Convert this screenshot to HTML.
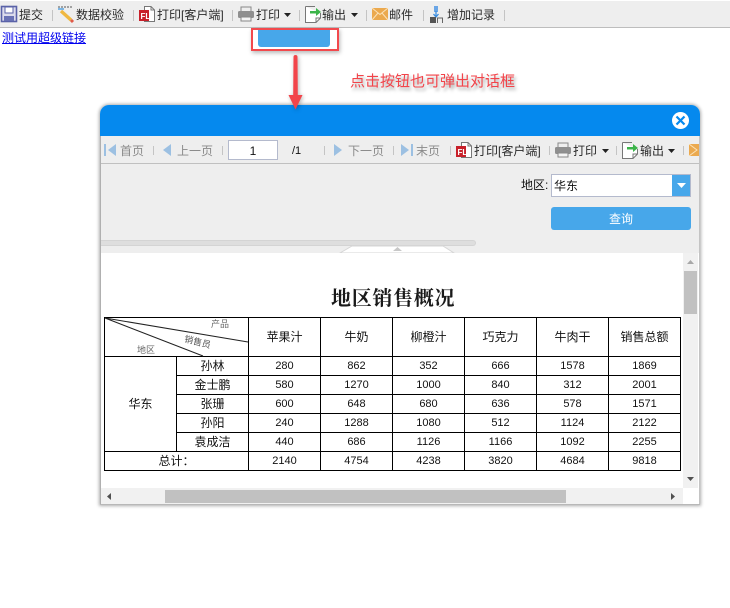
<!DOCTYPE html>
<html lang="zh">
<head>
<meta charset="utf-8">
<title>报表</title>
<style>
html,body{margin:0;padding:0;width:730px;height:608px;overflow:hidden;background:#fff}
body{position:relative;font-family:"Liberation Sans","WenQuanYi Zen Hei","Noto Sans CJK SC",sans-serif;font-size:12px;color:#222}
.a{position:absolute}
.t{position:absolute;white-space:nowrap;line-height:16px;font-size:12px;color:#2a2a2a}
.g{color:#8a8a8a}
.s{position:absolute;width:1px;height:11px;background:#c4c4c4}
svg{position:absolute;overflow:visible}
table{position:absolute;left:104px;top:317px;border-collapse:collapse;table-layout:fixed;width:577px;font-size:12px;color:#111}
td{border:1px solid #000;padding:0;text-align:center;height:18px;line-height:18px;overflow:hidden;background:#fff}
td.n{font-family:"Liberation Sans",sans-serif;font-size:11px}
tr.h td{height:38px}
</style>
</head>
<body>

<!-- top toolbar -->
<div class="a" style="left:0;top:1px;width:730px;height:26px;background:#eee"></div>
<div class="a" style="left:0;top:27px;width:730px;height:1px;background:#bdbdbd"></div>

<svg style="left:1px;top:6px" width="17" height="16"><rect x=".5" y=".5" width="15" height="15" fill="#dcdcec" stroke="#5a62a8" stroke-width="1.6"/><rect x="4" y="1" width="8" height="6" fill="#fff" stroke="#5a62a8"/><rect x="3" y="10" width="10" height="5" fill="#6a72b5"/></svg>
<span class="t" style="left:19px;top:7px">提交</span>
<div class="s" style="left:52px;top:10px"></div>

<svg style="left:58px;top:6px" width="17" height="17"><path d="M0 1H15" stroke="#555" stroke-dasharray="2 1"/><path d="M0 3H6" stroke="#4a9ee0" stroke-width="1.4"/><path d="M3 5L13 14" stroke="#f0b840" stroke-width="3.4"/><path d="M13 14L15 16" stroke="#e05a4a" stroke-width="3"/></svg>
<span class="t" style="left:76px;top:7px">数据校验</span>
<div class="s" style="left:133px;top:10px"></div>

<svg style="left:139px;top:6px" width="17" height="17"><path d="M5.500 .5H12L15.500 4V15.500H5.500Z" fill="#fff" stroke="#777"/><path d="M12 .5V4H15.500" fill="none" stroke="#777"/><rect x="0" y="4" width="10" height="11" fill="#c8202a"/><text x="1.500" y="13" font-size="8" font-weight="bold" fill="#fff" font-family="Liberation Sans">FL</text></svg>
<span class="t" style="left:157px;top:7px">打印[客户端]</span>
<div class="s" style="left:232px;top:10px"></div>

<svg style="left:238px;top:7px" width="16" height="15"><rect x="3" y="0" width="10" height="5" fill="#eee" stroke="#888"/><rect x="0" y="4" width="16" height="7" rx="1.500" fill="#8f8f8f"/><rect x="3" y="10" width="10" height="4" fill="#f4f4f4" stroke="#888"/></svg>
<span class="t" style="left:256px;top:7px">打印</span>
<svg style="left:284px;top:13px" width="7" height="4"><path d="M0 0H7L3.500 4Z" fill="#222"/></svg>
<div class="s" style="left:299px;top:10px"></div>

<svg style="left:305px;top:6px" width="17" height="17"><path d="M.5 .5H10M15.500 7V12L11 16.500H.5V.5" fill="#fff" stroke="#777"/><path d="M11 16V12H15.500" fill="none" stroke="#777"/><path d="M5 5H11V2L16 6L11 10V7.500H5Z" fill="#3cb44a"/></svg>
<span class="t" style="left:322px;top:7px">输出</span>
<svg style="left:351px;top:13px" width="7" height="4"><path d="M0 0H7L3.500 4Z" fill="#222"/></svg>
<div class="s" style="left:366px;top:10px"></div>

<svg style="left:372px;top:8px" width="16" height="12"><rect width="16" height="12" fill="#eba94e"/><path d="M0 0L8 6.500L16 0M0 12L6 5M16 12L10 5" fill="none" stroke="#fbe2b8"/></svg>
<span class="t" style="left:389px;top:7px">邮件</span>
<div class="s" style="left:423px;top:10px"></div>

<svg style="left:430px;top:6px" width="14" height="17"><rect x="4" y="0" width="4" height="6" fill="#6aa6e6"/><path d="M6 5V11M3.500 8L6 11L8.500 8" fill="none" stroke="#3c8ee0" stroke-width="1.300"/><rect x="0" y="11" width="6" height="6" fill="#555"/><path d="M7.500 17V12H12.500V17" fill="none" stroke="#666"/></svg>
<span class="t" style="left:447px;top:7px">增加记录</span>
<div class="s" style="left:504px;top:10px"></div>

<!-- link -->
<a class="t" style="left:2px;top:30px;color:#00e;text-decoration:underline;font-size:12px" href="#">测试用超级链接</a>

<!-- highlighted button -->
<div class="a" style="left:258px;top:28px;width:72px;height:19px;background:#47a7ea;border-radius:0 0 3px 3px"></div>
<div class="a" style="left:251px;top:28px;width:84px;height:19px;border:2px solid #f2494d;box-shadow:1px 2px 4px rgba(0,0,0,.28)"></div>

<!-- red note -->
<span class="a" style="left:350px;top:73px;font-size:15px;line-height:18px;color:#f2444a;white-space:nowrap;text-shadow:2px 3px 3px rgba(0,0,0,.35)">点击按钮也可弹出对话框</span>

<!-- dialog -->
<div class="a" style="left:100px;top:105px;width:600px;height:400px;background:#fff;border-radius:9px 9px 0 0;box-shadow:0 0 3px 1px rgba(0,0,0,.32);overflow:hidden">
  <div class="a" style="left:0;top:0;width:600px;height:31px;background:#0589ee"></div>
  <div class="a" style="left:0;top:31px;width:600px;height:27px;background:#eee"></div>
  <div class="a" style="left:0;top:58px;width:600px;height:1px;background:#c0c0c0"></div>
  <div class="a" style="left:0;top:59px;width:600px;height:89px;background:#eee"></div>
  <div class="a" style="left:0;top:31px;width:1px;height:369px;background:#b0b0b0"></div>
  <div class="a" style="left:599px;top:31px;width:1px;height:369px;background:#c4c4c4"></div>
  <div class="a" style="left:0;top:399px;width:600px;height:1px;background:#b8b8b8"></div>
</div>

<!-- arrow -->
<svg style="left:285px;top:52px;filter:drop-shadow(1px 1px 2px rgba(0,0,0,.3))" width="22" height="58"><path d="M8.500 5Q8.500 3 10.500 3Q12.500 3 12.500 5L12.800 43H17.500L10.500 57.500L3.500 43H8.200Z" fill="#f2444a"/></svg>

<!-- close -->
<svg style="left:672px;top:112px" width="17" height="17"><circle cx="8.500" cy="8.500" r="8.500" fill="#fff"/><path d="M4.500 4.500L12.500 12.500M12.500 4.500L4.500 12.500" stroke="#0589ee" stroke-width="2.200"/></svg>

<!-- dialog toolbar -->
<svg style="left:104px;top:144px" width="13" height="13"><rect x="0" y="0" width="2" height="12" fill="#9cc0e2"/><path d="M12 0V12L4 6Z" fill="#9cc0e2"/></svg>
<span class="t g" style="left:120px;top:143px">首页</span>
<div class="s" style="left:153px;top:146px;height:9px"></div>
<svg style="left:163px;top:144px" width="9" height="12"><path d="M8 0V12L0 6Z" fill="#9cc0e2"/></svg>
<span class="t g" style="left:177px;top:143px">上一页</span>
<div class="s" style="left:222px;top:146px;height:9px"></div>
<div class="a" style="left:228px;top:140px;width:48px;height:18px;background:#fff;border:1px solid #b4bacd;text-align:center;line-height:20px;font-size:12px;color:#111">1</div>
<span class="t" style="left:292px;top:143px;color:#111;font-size:11px">/1</span>
<div class="s" style="left:324px;top:146px;height:9px"></div>
<svg style="left:334px;top:144px" width="9" height="12"><path d="M0 0V12L8 6Z" fill="#9cc0e2"/></svg>
<span class="t g" style="left:348px;top:143px">下一页</span>
<div class="s" style="left:393px;top:146px;height:9px"></div>
<svg style="left:401px;top:144px" width="13" height="13"><path d="M0 0V12L8 6Z" fill="#9cc0e2"/><rect x="10" y="0" width="2" height="12" fill="#9cc0e2"/></svg>
<span class="t g" style="left:416px;top:143px">末页</span>
<div class="s" style="left:450px;top:146px;height:9px"></div>

<svg style="left:456px;top:142px" width="17" height="17"><path d="M5.500 .5H12L15.500 4V15.500H5.500Z" fill="#fff" stroke="#777"/><path d="M12 .5V4H15.500" fill="none" stroke="#777"/><rect x="0" y="4" width="10" height="11" fill="#c8202a"/><text x="1.500" y="13" font-size="8" font-weight="bold" fill="#fff" font-family="Liberation Sans">FL</text></svg>
<span class="t" style="left:474px;top:143px">打印[客户端]</span>
<div class="s" style="left:549px;top:146px;height:9px"></div>
<svg style="left:555px;top:143px" width="16" height="15"><rect x="3" y="0" width="10" height="5" fill="#eee" stroke="#888"/><rect x="0" y="4" width="16" height="7" rx="1.500" fill="#8f8f8f"/><rect x="3" y="10" width="10" height="4" fill="#f4f4f4" stroke="#888"/></svg>
<span class="t" style="left:573px;top:143px">打印</span>
<svg style="left:602px;top:149px" width="7" height="4"><path d="M0 0H7L3.500 4Z" fill="#222"/></svg>
<div class="s" style="left:616px;top:146px;height:9px"></div>
<svg style="left:622px;top:142px" width="17" height="17"><path d="M.5 .5H10M15.500 7V12L11 16.500H.5V.5" fill="#fff" stroke="#777"/><path d="M11 16V12H15.500" fill="none" stroke="#777"/><path d="M5 5H11V2L16 6L11 10V7.500H5Z" fill="#3cb44a"/></svg>
<span class="t" style="left:640px;top:143px">输出</span>
<svg style="left:668px;top:149px" width="7" height="4"><path d="M0 0H7L3.500 4Z" fill="#222"/></svg>
<div class="s" style="left:683px;top:146px;height:9px"></div>
<div class="a" style="left:689px;top:144px;width:10px;height:12px;background:#eba94e;overflow:hidden"><svg style="left:0;top:0" width="10" height="12"><path d="M0 0L8 6L0 12" fill="none" stroke="#fbe2b8"/></svg></div>

<!-- form -->
<span class="t" style="left:521px;top:177px;color:#111">地区:</span>
<div class="a" style="left:551px;top:174px;width:120px;height:21px;background:#fff;border:1px solid #b4bacd"></div>
<span class="t" style="left:554px;top:178px;color:#111">华东</span>
<div class="a" style="left:672px;top:174px;width:18px;height:21px;background:#47a7ea;border:1px solid #b4bacd;border-left:0"></div>
<svg style="left:677px;top:183px" width="9" height="5"><path d="M0 0H9L4.500 5Z" fill="#fff"/></svg>
<div class="a" style="left:551px;top:207px;width:140px;height:23px;background:#47a7ea;border-radius:3px;color:#fff;text-align:center;line-height:24px;font-size:12px">查询</div>

<!-- collapse bar -->
<div class="a" style="left:101px;top:240px;width:374px;height:4px;background:#dedede;border:1px solid #d4d4d4;border-left:0;border-radius:0 3px 3px 0"></div>
<svg style="left:340px;top:246px" width="116" height="7"><path d="M0 7L12 0H103L114 7Z" fill="#fff" stroke="#d6d6d6"/><path d="M53 5L57.500 1L62 5Z" fill="#c8c8c8"/></svg>

<!-- report area -->
<div class="a" style="left:101px;top:253px;width:582px;height:235px;background:#fff"></div>
<div class="a" style="left:331px;top:286px;font-family:'Noto Serif CJK SC',serif;font-weight:bold;font-size:20px;line-height:22px;color:#1a1a1a;white-space:nowrap;letter-spacing:.7px">地区销售概况</div>

<table>
<colgroup><col style="width:72px"><col style="width:72px"><col style="width:72px"><col style="width:72px"><col style="width:72px"><col style="width:72px"><col style="width:72px"><col style="width:72px"></colgroup>
<tr class="h"><td colspan="2"></td><td>苹果汁</td><td>牛奶</td><td>柳橙汁</td><td>巧克力</td><td>牛肉干</td><td>销售总额</td></tr>
<tr><td rowspan="5">华东</td><td>孙林</td><td class="n">280</td><td class="n">862</td><td class="n">352</td><td class="n">666</td><td class="n">1578</td><td class="n">1869</td></tr>
<tr><td>金士鹏</td><td class="n">580</td><td class="n">1270</td><td class="n">1000</td><td class="n">840</td><td class="n">312</td><td class="n">2001</td></tr>
<tr><td>张珊</td><td class="n">600</td><td class="n">648</td><td class="n">680</td><td class="n">636</td><td class="n">578</td><td class="n">1571</td></tr>
<tr><td>孙阳</td><td class="n">240</td><td class="n">1288</td><td class="n">1080</td><td class="n">512</td><td class="n">1124</td><td class="n">2122</td></tr>
<tr><td>袁成洁</td><td class="n">440</td><td class="n">686</td><td class="n">1126</td><td class="n">1166</td><td class="n">1092</td><td class="n">2255</td></tr>
<tr><td colspan="2">总计：</td><td class="n">2140</td><td class="n">4754</td><td class="n">4238</td><td class="n">3820</td><td class="n">4684</td><td class="n">9818</td></tr>
</table>

<!-- diagonal header -->
<svg style="left:104px;top:317px" width="145" height="40"><path d="M1 1L144 25M1 1L99 39" stroke="#222" stroke-width="1" fill="none"/></svg>
<span class="a" style="left:211px;top:319px;font-size:9px;line-height:11px;color:#666;white-space:nowrap">产品</span>
<span class="a" style="left:184px;top:337px;font-size:9px;line-height:11px;color:#555;white-space:nowrap;transform:rotate(14deg)">销售员</span>
<span class="a" style="left:137px;top:345px;font-size:9px;line-height:11px;color:#666;white-space:nowrap">地区</span>

<!-- vertical scrollbar -->
<div class="a" style="left:683px;top:253px;width:15px;height:235px;background:#f1f1f1"></div>
<div class="a" style="left:684px;top:271px;width:13px;height:43px;background:#c1c1c1"></div>
<svg style="left:687px;top:260px" width="7" height="4"><path d="M0 4H7L3.500 0Z" fill="#a8a8a8"/></svg>
<svg style="left:687px;top:477px" width="7" height="4"><path d="M0 0H7L3.500 4Z" fill="#505050"/></svg>

<!-- horizontal scrollbar -->
<div class="a" style="left:101px;top:488px;width:582px;height:16px;background:#f1f1f1"></div>
<div class="a" style="left:165px;top:490px;width:401px;height:13px;background:#c1c1c1"></div>
<svg style="left:107px;top:493px" width="4" height="7"><path d="M4 0V7L0 3.500Z" fill="#505050"/></svg>
<svg style="left:671px;top:493px" width="4" height="7"><path d="M0 0V7L4 3.500Z" fill="#505050"/></svg>

</body>
</html>
